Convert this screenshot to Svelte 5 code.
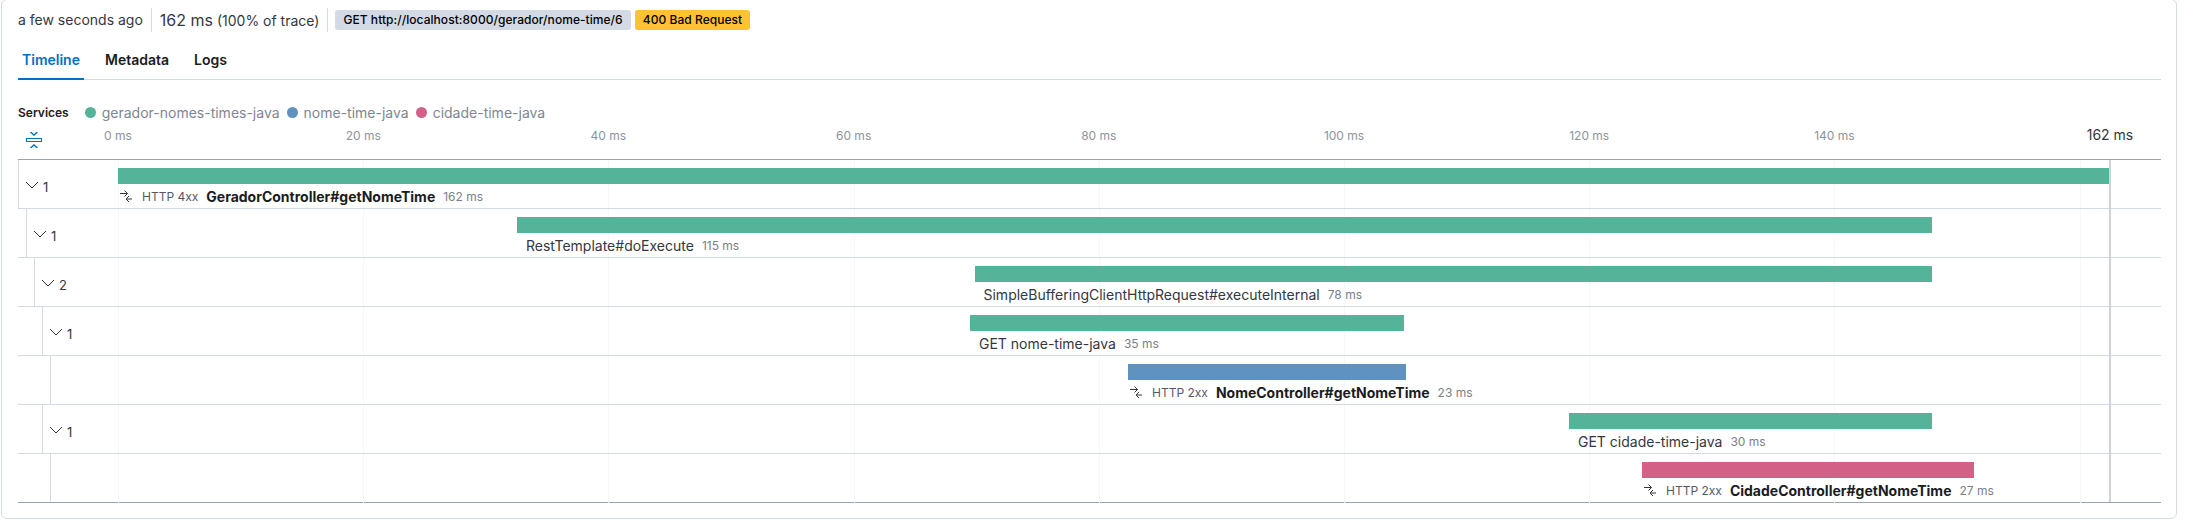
<script>
  const PX_PER_MS = 12.26

  const x = (ms) => ms * PX_PER_MS

  const ticks = [0, 20, 40, 60, 80, 100, 120, 140, 160]

  const services = [
    { name: 'gerador-nomes-times-java', color: '#54b399' },
    { name: 'nome-time-java', color: '#6092c0' },
    { name: 'cidade-time-java', color: '#d36086' }
  ]

  const rows = [
    { depth: 0, count: 1, left: 0, width: 1992, color: '#54b399', http: 'HTTP 4xx', name: 'GeradorController#getNomeTime', ms: '162 ms' },
    { depth: 1, count: 1, left: 399, width: 1415, color: '#54b399', name: 'RestTemplate#doExecute', ms: '115 ms' },
    { depth: 2, count: 2, left: 856.5, width: 957.5, color: '#54b399', name: 'SimpleBufferingClientHttpRequest#executeInternal', ms: '78 ms' },
    { depth: 3, count: 1, left: 852, width: 434, color: '#54b399', name: 'GET nome-time-java', ms: '35 ms' },
    { depth: 4, left: 1010, width: 278, color: '#6092c0', http: 'HTTP 2xx', name: 'NomeController#getNomeTime', ms: '23 ms' },
    { depth: 3, count: 1, left: 1451, width: 363, color: '#54b399', name: 'GET cidade-time-java', ms: '30 ms' },
    { depth: 4, left: 1524, width: 332, color: '#d36086', http: 'HTTP 2xx', name: 'CidadeController#getNomeTime', ms: '27 ms' }
  ]
</script>

{#snippet exitSpan()}
  <svg class="exit" width="12" height="12" viewBox="0 0 12 12" fill="none" stroke="#343741">
    <path d="M0 3.5h7.5M4.5.5l3 3-3 3" />
    <path d="M12 9H6M9 6 6 9l3 3" />
  </svg>
{/snippet}

<div class="card">
  <div class="summary">
    <span class="ago">a few seconds ago</span>
    <span class="sep"></span>
    <span class="dur"><span class="big">162 ms</span> (100% of trace)</span>
    <span class="sep"></span>
    <span class="badge grey">GET http://localhost:8000/gerador/nome-time/6</span>
    <span class="badge amber">400 Bad Request</span>
  </div>

  <div class="tabs">
    <span class="tab active">Timeline</span>
    <span class="tab">Metadata</span>
    <span class="tab">Logs</span>
  </div>

  <div class="legend">
    <strong>Services</strong>
    {#each services as s}
      <span class="svc"><i style="background:{s.color}"></i>{s.name}</span>
    {/each}
  </div>

  <div class="axis">
    <svg class="collapse" width="16" height="16" viewBox="0 0 16 16" fill="none" stroke="#0071c2">
      <path stroke-width="1.4" d="M4.5 0 8 3l3.5-3M4.5 16 8 13l3.5 3" />
      <rect x="0.5" y="6.5" width="15" height="3" />
    </svg>
    <div class="scale">
      {#each ticks.slice(0, -1) as t}
        <span class="tick" style="left:{x(t)}px">{t} ms</span>
      {/each}
      <span class="tick end">162 ms</span>
    </div>
  </div>

  <div class="waterfall">
    <div class="grid">
      {#each ticks as t}
        <span class="gridline" style="left:{x(t)}px"></span>
      {/each}
      <span class="endline"></span>
    </div>

    {#each rows as r}
      <div class="row">
        <div class="toggle" style="padding-left:{r.depth * 8}px">
          <div class="indent">
            {#if r.count}
              <svg class="chev" width="14" height="8" viewBox="0 0 14 8" fill="none" stroke="#343741">
                <path d="M1 1l6 6 6-6" />
              </svg>
              <span class="count">{r.count}</span>
            {/if}
          </div>
        </div>
        <div class="span" style="padding-left:{r.left}px">
          <div class="bar" style="width:{r.width}px;background:{r.color}"></div>
          <div class="label" class:plain={!r.http}>
            {#if r.http}
              {@render exitSpan()}
              <span class="http">{r.http}</span>
              <span class="name bold">{r.name}</span>
            {:else}
              <span class="name">{r.name}</span>
            {/if}
            <span class="ms">{r.ms}</span>
          </div>
        </div>
      </div>
    {/each}
  </div>
</div>

<style>
  :global(body) {
    margin: 0;
    background: #fff;
  }

  .card {
    box-sizing: border-box;
    width: 2176px;
    height: 520px;
    margin: -1px 0 0 1px;
    padding: 8px 15px 0 16px;
    border: 1px solid #d3dae6;
    border-radius: 6px;
    font-family: Inter, "Liberation Sans", sans-serif;
    color: #343741;
    font-size: 14px;
    overflow: hidden;
  }

  .summary {
    display: flex;
    align-items: center;
    height: 24px;
    white-space: nowrap;
    line-height: 20px;
  }
  .sep {
    width: 1px;
    height: 24px;
    background: #d3dae6;
    margin: 0 8px;
  }
  .sep:nth-of-type(4) {
    margin-right: 7px;
  }
  .big { font-size: 16px; }
  .badge {
    height: 20px;
    line-height: 20px;
    padding: 0 8px;
    border-radius: 3px;
    font-size: 12px;
    font-weight: 500;
    letter-spacing: 0.05px;
    color: #000;
  }
  .grey { background: #d3dae6; }
  .amber { background: #fec233; margin-left: 4px; }

  .tabs {
    display: flex;
    height: 48px;
    box-sizing: border-box;
    border-bottom: 1px solid #d3dae6;
  }
  .tab {
    padding: 18px 4px 0;
    margin-right: 17px;
    font-weight: 600;
    line-height: 20px;
    height: 48px;
    box-sizing: border-box;
    color: #1a1c21;
  }
  .active {
    color: #0071c2;
    border-bottom: 2px solid #0071c2;
  }

  .legend {
    display: flex;
    align-items: center;
    height: 20px;
    margin-top: 22px;
    font-size: 14px;
    color: #7f8693;
    white-space: nowrap;
  }
  .legend strong {
    font-size: 12px;
    font-weight: 600;
    color: #1a1c21;
    margin-right: 16px;
  }
  .svc {
    display: flex;
    align-items: center;
    margin-right: 7px;
  }
  .svc i {
    width: 11px;
    height: 11px;
    border-radius: 50%;
    margin-right: 6px;
  }

  .axis {
    display: flex;
    align-items: center;
    height: 38px;
    border-bottom: 1px solid #98a2b3;
    box-sizing: border-box;
  }
  .collapse {
    margin: -2px 0 0 8px;
  }
  .scale {
    position: relative;
    margin-left: 76px;
    flex: 1;
    height: 100%;
  }
  .tick {
    position: absolute;
    top: 6px;
    transform: translateX(-50%);
    font-size: 12px;
    line-height: 16px;
    color: #8c93a0;
    white-space: nowrap;
  }
  .end {
    left: 1992px;
    top: 3px;
    font-size: 14px;
    line-height: 20px;
    color: #343741;
  }

  .waterfall {
    position: relative;
    border-bottom: 1px solid #98a2b3;
  }
  .grid {
    position: absolute;
    inset: 0 0 0 100px;
    pointer-events: none;
  }
  .gridline {
    position: absolute;
    top: 0;
    bottom: -1px;
    width: 1px;
    background: #f5f7fa;
    z-index: 0;
  }
  .endline {
    position: absolute;
    left: 1991px;
    top: 0;
    bottom: 0;
    width: 2px;
    background: #cdd2dd;
    z-index: 2;
  }

  .row {
    position: relative;
    z-index: 1;
    display: flex;
    height: 49px;
    box-sizing: border-box;
    border-bottom: 1px solid #d3dae6;
  }
  .row:last-child {
    height: 48px;
    border-bottom: 0;
  }
  .toggle {
    width: 100px;
    flex: none;
    box-sizing: border-box;
  }
  .indent {
    position: relative;
    height: 48px;
    box-sizing: border-box;
    border-left: 1px solid #d3dae6;
  }
  .chev {
    position: absolute;
    top: 21px;
    left: 6px;
  }
  .count {
    position: absolute;
    top: 17px;
    left: 24px;
    font-size: 13px;
    line-height: 20px;
  }
  .span {
    flex: 1;
    padding-top: 8px;
    min-width: 0;
  }
  .bar {
    height: 16px;
  }
  .label {
    display: flex;
    align-items: center;
    height: 24px;
    white-space: nowrap;
    padding-left: 2px;
  }
  .plain {
    padding-left: 9px;
  }
  .exit {
    margin-right: 10px;
    flex: none;
  }
  .http {
    font-size: 12px;
    margin-right: 8px;
    color: #535966;
  }
  .name {
    font-size: 14px;
    margin-right: 8px;
  }
  .bold {
    font-weight: 700;
    color: #1a1c21;
  }
  .ms {
    font-size: 12px;
    color: #7a808c;
  }
</style>
